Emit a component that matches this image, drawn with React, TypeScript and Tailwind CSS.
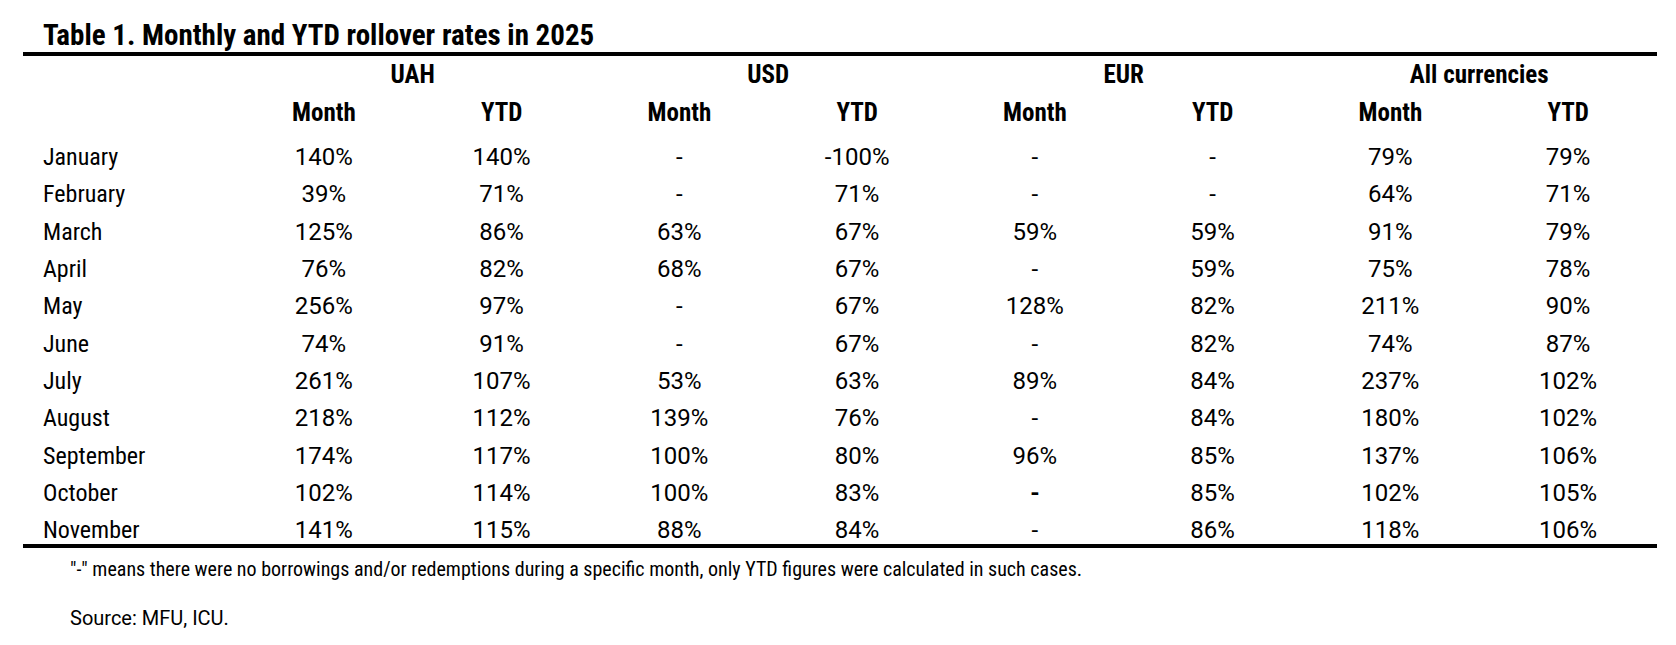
const groups = ["UAH", "USD", "EUR", "All currencies"];

const rows: [string, string[]][] = [
  ["January", ["140%", "140%", "-", "-100%", "-", "-", "79%", "79%"]],
  ["February", ["39%", "71%", "-", "71%", "-", "-", "64%", "71%"]],
  ["March", ["125%", "86%", "63%", "67%", "59%", "59%", "91%", "79%"]],
  ["April", ["76%", "82%", "68%", "67%", "-", "59%", "75%", "78%"]],
  ["May", ["256%", "97%", "-", "67%", "128%", "82%", "211%", "90%"]],
  ["June", ["74%", "91%", "-", "67%", "-", "82%", "74%", "87%"]],
  ["July", ["261%", "107%", "53%", "63%", "89%", "84%", "237%", "102%"]],
  ["August", ["218%", "112%", "139%", "76%", "-", "84%", "180%", "102%"]],
  ["September", ["174%", "117%", "100%", "80%", "96%", "85%", "137%", "106%"]],
  ["October", ["102%", "114%", "100%", "83%", "-", "85%", "102%", "105%"]],
  ["November", ["141%", "115%", "88%", "84%", "-", "86%", "118%", "106%"]],
];

export default function App() {
  return (
    <div className="w-[1676px] h-[645px] bg-white text-black font-['Roboto',sans-serif] font-stretch-condensed">
      <div className="ml-[23px] w-[1634px] pt-[19px]">
        <h1 className="pl-[20px] text-[29px] leading-[32px] font-bold">
          Table 1. Monthly and YTD rollover rates in 2025
        </h1>
        <div className="border-t-4 border-black mt-[1px]" />
        <div className="grid grid-cols-[212px_repeat(4,1fr)] h-[23px] items-center text-[25px] font-bold font-stretch-[80%]">
          <div />
          {groups.map((g) => (
            <div key={g} className="text-center">
              {g}
            </div>
          ))}
        </div>
        <div className="grid grid-cols-[212px_repeat(8,1fr)] h-[55px] pt-[12px] items-center text-[25px] font-bold font-stretch-[80%]">
          <div />
          {groups.map((g) => [
            <div key={g + "m"} className="text-center">Month</div>,
            <div key={g + "y"} className="text-center">YTD</div>,
          ])}
        </div>
        <div>
          {rows.map(([label, vals]) => (
            <div
              key={label}
              className="grid grid-cols-[212px_repeat(8,1fr)] h-[37.3px] pt-[9px] items-center text-[24px] leading-[28px]"
            >
              <div className="pl-[20px]">{label}</div>
              {vals.map((v, i) => (
                <div
                  key={i}
                  className={
                    label === "October" && i === 4
                      ? "text-center font-bold font-stretch-[92%]"
                      : "text-center font-stretch-[92%]"
                  }
                >
                  {v}
                </div>
              ))}
            </div>
          ))}
        </div>
        <div className="border-t-4 border-black" />
        <p className="pl-[47px] mt-[9px] text-[20px] leading-[24px]">
          "-" means there were no borrowings and/or redemptions during a specific month, only YTD figures were calculated in such cases.
        </p>
        <p className="pl-[47px] mt-[25px] text-[20px] leading-[24px] font-stretch-[88%]">Source: MFU, ICU.</p>
      </div>
    </div>
  );
}
